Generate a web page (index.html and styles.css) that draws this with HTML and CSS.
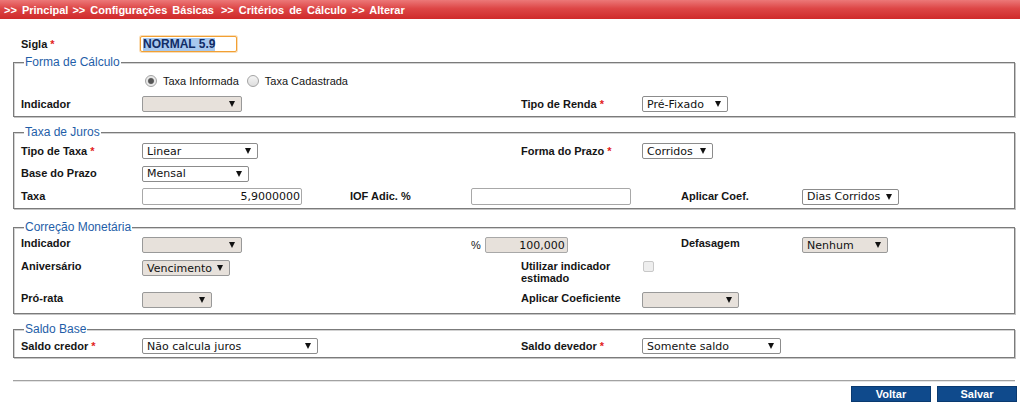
FILE: index.html
```html
<!DOCTYPE html>
<html lang="pt-BR">
<head>
<meta charset="utf-8">
<title>Critérios de Cálculo - Alterar</title>
<link rel="stylesheet" href="styles.css">
</head>
<body>
<nav class="crumbs">
  <span class="c1">&gt;&gt; Principal</span>
  <span class="c2">&gt;&gt; Configurações Básicas</span>
  <span class="c3">&gt;&gt; Critérios de Cálculo</span>
  <span>&gt;&gt; Alterar</span>
</nav>
<main class="page">
  <div class="sigla">
    <span class="lbl">Sigla <em>*</em></span>
    <span class="txt focus"><span class="hl">NORMAL 5.9</span></span>
  </div>

  <fieldset class="box forma">
    <legend>Forma de Cálculo</legend>
    <div class="row pair2 r-radio">
      <span></span>
      <div class="radios">
        <label class="radio"><input type="radio" name="forma" checked><span>Taxa Informada</span></label>
        <label class="radio"><input type="radio" name="forma"><span>Taxa Cadastrada</span></label>
      </div>
    </div>
    <div class="row pair2 r-ind">
      <span class="lbl">Indicador</span>
      <span class="sel off w100"></span>
      <span class="lbl">Tipo de Renda <em>*</em></span>
      <span class="sel w86">Pré-Fixado</span>
    </div>
  </fieldset>

  <fieldset class="box juros">
    <legend>Taxa de Juros</legend>
    <div class="row pair2 h22">
      <span class="lbl">Tipo de Taxa <em>*</em></span>
      <span class="sel w116">Linear</span>
      <span class="lbl">Forma do Prazo <em>*</em></span>
      <span class="sel w71">Corridos</span>
    </div>
    <div class="row pair2 h23">
      <span class="lbl">Base do Prazo</span>
      <span class="sel w107">Mensal</span>
    </div>
    <div class="row pair3 h23">
      <span class="lbl">Taxa</span>
      <span class="txt w160">5,9000000</span>
      <span class="lbl">IOF Adic. %</span>
      <span class="txt w160"></span>
      <span class="lbl">Aplicar Coef.</span>
      <span class="sel w97">Dias Corridos</span>
    </div>
  </fieldset>

  <fieldset class="box correcao">
    <legend>Correção Monetária</legend>
    <div class="row pair3 top h23">
      <span class="lbl">Indicador</span>
      <span class="sel off w100"></span>
      <span></span>
      <span class="pct"><span>%</span><span class="txt off w83">100,000</span></span>
      <span class="lbl">Defasagem</span>
      <span class="sel off w86">Nenhum</span>
    </div>
    <div class="row pair2 top h32">
      <span class="lbl">Aniversário</span>
      <span class="sel off w88">Vencimento</span>
      <span class="lbl two">Utilizar indicador estimado</span>
      <input class="check" type="checkbox" disabled>
    </div>
    <div class="row pair2 top h16">
      <span class="lbl">Pró-rata</span>
      <span class="sel off w70"></span>
      <span class="lbl">Aplicar Coeficiente</span>
      <span class="sel off w97"></span>
    </div>
  </fieldset>

  <fieldset class="box saldo">
    <legend>Saldo Base</legend>
    <div class="row pair2 h16">
      <span class="lbl">Saldo credor <em>*</em></span>
      <span class="sel w176">Não calcula juros</span>
      <span class="lbl">Saldo devedor <em>*</em></span>
      <span class="sel w139">Somente saldo</span>
    </div>
  </fieldset>

  <hr class="rule">

  <div class="actions">
    <button class="btn" type="button">Voltar</button>
    <button class="btn" type="button">Salvar</button>
  </div>
</main>
</body>
</html>
```

FILE: styles.css
```css
* { box-sizing: border-box; }

html, body {
  margin: 0;
  background: #fff;
}

body {
  width: 1020px;
  font-family: "Liberation Sans", Arial, sans-serif;
  font-size: 11px;
  color: #151515;
}

/* breadcrumb bar */
.crumbs {
  height: 19px;
  display: flex;
  align-items: center;
  padding-left: 4px;
  background: linear-gradient(to bottom, #ec7878 0%, #dd4646 45%, #cf2a2a 100%);
  color: #fff;
  font-weight: bold;
  font-size: 11px;
  word-spacing: 2px;
  white-space: nowrap;
}
.crumbs .c1 { margin-right: 4px; }
.crumbs .c2 { margin-right: 7px; }
.crumbs .c3 { margin-right: 5px; }

.page {
  padding: 17px 5px 0 13px;
}

/* labels */
.lbl {
  font-weight: bold;
  line-height: 13px;
  color: #151515;
}
.lbl em {
  font-style: normal;
  color: #e21c1c;
}
.lbl.two {
  line-height: 12px;
  padding-right: 20px;
}

/* sigla row */
.sigla {
  display: grid;
  grid-template-columns: 119px 97px;
  align-items: center;
  padding-left: 8px;
  height: 16px;
}

/* text boxes */
.txt {
  display: flex;
  align-items: center;
  justify-content: flex-end;
  height: 17px;
  border: 1px solid #a8a8a8;
  border-radius: 2px;
  background: #fff;
  padding: 0 1px 0 3px;
  font-family: "DejaVu Sans", Verdana, sans-serif;
  font-size: 11px;
  color: #111;
}
.txt.off { background: #e7e1db; height: 16px; padding-right: 2px; }
.txt.focus {
  justify-content: flex-start;
  height: 16px;
  width: 97px;
  border-color: #f2a033;
  box-shadow: 0 0 0 1px rgba(242, 160, 51, 0.35);
  background: #fff;
  padding-left: 2px;
}
.hl {
  font-family: "Liberation Sans", Arial, sans-serif;
  font-size: 12px;
  font-weight: bold;
  line-height: 13px;
  background: #a7c8ee;
  color: #102c66;
}

/* select boxes */
.sel {
  display: flex;
  align-items: center;
  justify-content: space-between;
  height: 16px;
  border: 1px solid #8c8c8c;
  border-radius: 2px;
  background: #fff;
  padding: 0 6px 0 4px;
  font-family: "DejaVu Sans", Verdana, sans-serif;
  font-size: 11px;
  color: #111;
  white-space: nowrap;
}
.sel::after {
  content: "";
  margin-left: auto;
  border-left: 3px solid transparent;
  border-right: 3px solid transparent;
  border-top: 6px solid #111;
}
.sel.off { background: #e7e1db; border-color: #999; }

.w70 { width: 70px; }
.w71 { width: 71px; }
.w83 { width: 83px; }
.w86 { width: 86px; }
.w88 { width: 88px; }
.w97 { width: 97px; }
.w100 { width: 100px; }
.w107 { width: 107px; }
.w116 { width: 116px; }
.w139 { width: 139px; }
.w160 { width: 160px; }
.w176 { width: 176px; }

/* fieldsets */
.box {
  margin: 0;
  padding: 0;
  min-width: 0;
  border: 1px solid #7b7b7b;
  box-shadow: inset 1px 1px 0 #d2d2d2, 1px 1px 0 #c4c4c4;
}
.box legend {
  margin-left: 10px;
  padding: 0 1px;
  font-size: 12px;
  line-height: 15px;
  color: #1f5ea8;
  background: #fff;
}
.forma { margin-top: 3px; }
.juros { margin-top: 8px; }
.correcao { margin-top: 11px; padding: 2px 0 5px; }
.saldo { margin-top: 8px; padding: 1px 0 3px; }

/* grid rows */
.row {
  display: grid;
  align-items: center;
  padding-left: 7px;
}
.row.top { align-items: start; }
.pair2 { grid-template-columns: 121px 379px 121px 1fr; }
.pair3 { grid-template-columns: 121px 208px 121px 210px 121px 1fr; }
.r-radio { height: 22px; }
.r-ind { height: 24px; }
.h16 { height: 16px; }
.h22 { height: 22px; }
.h23 { height: 23px; }
.h32 { height: 32px; }

/* radios */
.radios {
  display: flex;
  align-items: center;
  padding-left: 3px;
}
.radio {
  display: flex;
  align-items: center;
  margin-right: 8px;
  font-size: 11px;
  color: #151515;
}
.radio input {
  appearance: none;
  -webkit-appearance: none;
  width: 12px;
  height: 12px;
  margin: 0 6px 0 0;
  border: 1px solid #a3a3a3;
  border-radius: 50%;
  background: linear-gradient(to bottom, #f4f4f4, #dedede);
}
.radio input:checked {
  background: radial-gradient(circle, #555 0 2.4px, #9a9a9a 3px, #e9e9e9 3.6px);
}

/* percent field */
.pct {
  display: flex;
  align-items: center;
  gap: 4px;
  color: #151515;
}

/* checkbox */
.check {
  appearance: none;
  -webkit-appearance: none;
  width: 11px;
  height: 11px;
  margin: 1px 0 0 1px;
  border: 1px solid #c8c8c8;
  border-radius: 2px;
  background: #eeeeee;
}

/* bottom */
.rule {
  margin: 22px 0 0;
  height: 0;
  border: 0;
  border-top: 1px solid #a2a2a2;
  border-bottom: 1px solid #e4e4e4;
}

.actions {
  display: flex;
  justify-content: flex-end;
  gap: 6px;
  margin: 4px -2px 0 0;
}
.btn {
  width: 80px;
  height: 16px;
  padding: 0;
  border: 1px solid #0a3a70;
  background: #0f4a8c;
  color: #fff;
  font-family: "Liberation Sans", Arial, sans-serif;
  font-size: 11px;
  font-weight: bold;
  line-height: 14px;
}
```
